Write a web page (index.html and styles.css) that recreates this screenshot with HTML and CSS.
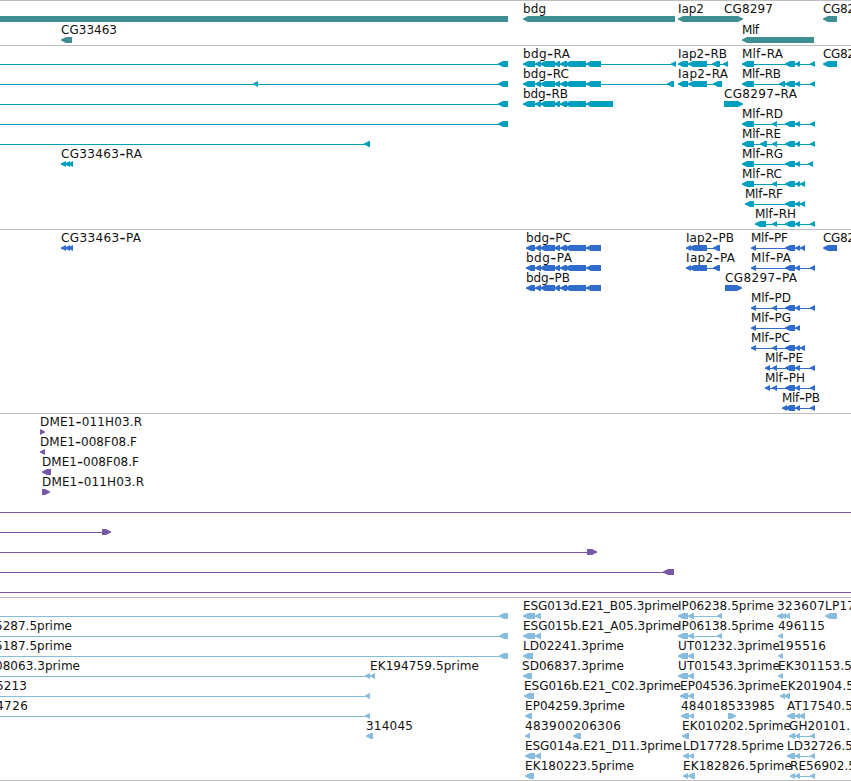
FILE: index.html
```html
<!DOCTYPE html>
<html lang="en">
<head>
<meta charset="utf-8">
<title>Genome browser</title>
<link rel="stylesheet" href="styles.css">
</head>
<body>
<main class="browser">
  <svg class="track genes" data-track="genes"></svg>
  <svg class="track transcripts" data-track="transcripts"></svg>
  <svg class="track proteins" data-track="proteins"></svg>
  <svg class="track clones" data-track="clones"></svg>
  <svg class="track ests" data-track="ests"></svg>
</main>
<script src="tracks.js"></script>
</body>
</html>
```
FILE: styles.css
```css
body {
  margin: 0;
  background: #fff;
}

.browser {
  display: flex;
  flex-direction: column;
  width: 851px;
  height: 780px;
  border-bottom: 1px solid #bebebe;
  overflow: hidden;
}

.track {
  display: block;
  flex: none;
  box-sizing: border-box;
  width: 851px;
  height: 184px;
  border-top: 1px solid #bebebe;
  overflow: hidden;
}

.genes { height: 45px; color: #3e8e93; }
.transcripts { color: #009ebf; }
.proteins { color: #306ccc; }
.clones { color: #7657a8; }
.ests { height: 183px; color: #88bcdd; }

.label {
  font: 12px "DejaVu Sans", sans-serif;
  fill: #111;
}

.hyphen {
  font-size: 17px;
}

.shape {
  fill: currentColor;
}
```
FILE: tracks.js
```js
// Feature: [row, blocks, label, label x, label width].
// Blocks are "start-end" pairs; "<" points left, ">" points right, "=" is a
// flat block, "~" is a bare intron line.
const BDG = '<535-541 <540-555 <554-560 <560-567 <565-586 ';
const MLF = ' <785-795 <795-800';

const tracks = {
  genes: [
    [0, '=0-508'],
    [0, '<523-675', 'bdg', 523, 23],
    [0, '<678-725', 'Iap2', 678, 26],
    [0, '>724-743', 'CG8297', 724, 49],
    [0, '<823-837', 'CG82', 823, 32],
    [1, '<61-72', 'CG33463', 61, 56],
    [1, '<742-814', 'Mlf', 742, 17]
  ],
  transcripts: [
    [0, '~0-508 <498-508'],
    [1, '~0-508 <253-258 <498-508'],
    [2, '~0-508 <498-508'],
    [3, '~0-508 <498-508'],
    [4, '~0-370 <364-370'],
    [5, '<61-66 <65-70 <68-73', 'CG33463-RA', 61, 81],
    [0, '<523-535 ' + BDG + '<586-601 <671-676', 'bdg-RA', 523, 47],
    [1, '<523-535 ' + BDG + '<586-601 <667-674', 'bdg-RC', 523, 46],
    [2, '<523-535 ' + BDG + '<586-613', 'bdg-RB', 523, 45],
    [0, '<678-688 <688-707 <712-720 <723-728', 'Iap2-RB', 678, 49],
    [1, '<678-688 <688-707 <713-722', 'Iap2-RA', 678, 50],
    [2, '>724-743', 'CG8297-RA', 724, 73],
    [0, '<742-754' + MLF + ' <810-815', 'Mlf-RA', 742, 41],
    [1, '<742-754 <779-785' + MLF + ' <810-815', 'Mlf-RB', 742, 39],
    [3, '<742-754 <772-777' + MLF + ' <810-815', 'Mlf-RD', 742, 41],
    [4, '<742-754 <760-767 <772-777' + MLF + ' <810-815', 'Mlf-RE', 742, 39],
    [5, '<742-754' + MLF + ' <808-813', 'Mlf-RG', 742, 41],
    [6, '<742-754 <772-777' + MLF + ' <800-805', 'Mlf-RC', 742, 40],
    [7, '<745-754' + MLF + ' <800-805', 'Mlf-RF', 745, 38],
    [8, '<755-766 <772-777' + MLF + ' <810-815', 'Mlf-RH', 755, 41],
    [0, '<823-837', 'CG82', 823, 32]
  ],
  proteins: [
    [0, '<61-66 <65-70 <68-73', 'CG33463-PA', 61, 80],
    [0, '<526-535 ' + BDG + '<586-601', 'bdg-PC', 526, 45],
    [1, '<526-535 ' + BDG + '<586-601', 'bdg-PA', 526, 46],
    [2, '<526-535 ' + BDG + '<586-601', 'bdg-PB', 526, 44],
    [0, '<686-691 <689-707 <713-720', 'Iap2-PB', 686, 48],
    [1, '<686-691 <689-707 <713-720', 'Iap2-PA', 686, 49],
    [2, '>725-742', 'CG8297-PA', 725, 72],
    [0, '<751-756' + MLF + ' <800-805', 'Mlf-PF', 751, 37],
    [1, '<751-756' + MLF + ' <810-815', 'Mlf-PA', 751, 40],
    [3, '<751-756 <772-777' + MLF + ' <810-815', 'Mlf-PD', 751, 40],
    [4, '<751-756' + MLF, 'Mlf-PG', 751, 40],
    [5, '<751-756 <772-777' + MLF + ' <800-805', 'Mlf-PC', 751, 39],
    [6, '<765-770 <772-777' + MLF + ' <810-815', 'Mlf-PE', 765, 38],
    [7, '<765-770 <772-777' + MLF + ' <810-815', 'Mlf-PH', 765, 40],
    [8, '<782-787' + MLF + ' <810-815', 'Mlf-PB', 782, 38],
    [0, '<823-837', 'CG82', 823, 32]
  ],
  clones: [
    [0, '>40-45', 'DME1-011H03.R', 40, 102],
    [1, '<40-45', 'DME1-008F08.F', 40, 97],
    [2, '<42-51', 'DME1-008F08.F', 42, 97],
    [3, '>42-50', 'DME1-011H03.R', 42, 102],
    [4, '~0-851'],
    [5, '~0-111 >102-111'],
    [6, '~0-597 >587-597'],
    [7, '~0-674 <663-674'],
    [8, '~0-851']
  ],
  ests: [
    [0, '~0-508 <499-508'],
    [1, '~0-508 <499-508', '5287.5prime', -5, 77],
    [2, '~0-508 <499-508', '5187.5prime', -5, 77],
    [3, '~0-375 <365-370 <370-375', '08063.3prime', -5, 85],
    [4, '~0-370 <365-370', '5213', -4, 31],
    [5, '~0-370 <365-370', '4726', -4, 32],
    [3, '', 'EK194759.5prime', 370, 109],
    [6, '<366-373', '314045', 366, 47],
    [0, '<523-535 <535-541', 'ESG013d.E21_B05.3prime', 523, 156],
    [1, '<523-535 <535-541', 'ESG015b.E21_A05.3prime', 523, 157],
    [2, '<523-533', 'LD02241.3prime', 523, 101],
    [3, '<523-532', 'SD06837.3prime', 522, 102],
    [4, '<524-534', 'ESG016b.E21_C02.3prime', 524, 157],
    [5, '<525-532', 'EP04259.3prime', 525, 100],
    [6, '<525-530', '483900206306', 525, 96],
    [6, '<573-581'],
    [7, '<525-535 <535-541', 'ESG014a.E21_D11.3prime', 525, 157],
    [8, '<525-534', 'EK180223.5prime', 525, 109],
    [0, '<678-688 <688-694 <717-722', 'IP06238.5prime', 678, 96],
    [1, '<678-688 <688-694 <717-722', 'IP06138.5prime', 678, 96],
    [2, '<678-688 <688-694', 'UT01232.3prime', 678, 102],
    [3, '<678-688 <688-694', 'UT01543.3prime', 678, 102],
    [4, '<680-688 <688-694', 'EP04536.3prime', 680, 100],
    [5, '<681-689 <689-694', '484018533985', 681, 94],
    [5, '>728-736'],
    [6, '<682-689', 'EK010202.5prime', 682, 109],
    [7, '<683-689 <689-694', 'LD17728.5prime', 683, 101],
    [8, '<683-688 <688-695', 'EK182826.5prime', 683, 109],
    [0, '<777-783 <781-786 <785-790', '323607', 777, 48],
    [1, '<778-783', '496115', 778, 47],
    [2, '<778-783', '195516', 778, 48],
    [3, '<778-783', 'EK301153.5', 778, 74],
    [4, '<780-785 <784-790', 'EK201904.5', 780, 74],
    [5, '<787-795 <795-800 <799-805', 'AT17540.5', 787, 66],
    [6, '<789-795 <795-800 <810-815', 'GH20101.', 789, 61],
    [7, '<787-795 <795-800 <810-815', 'LD32726.5', 787, 66],
    [8, '<790-795 <795-800 <810-815', 'RE56902.5', 790, 66],
    [0, '<825-837', 'LP17', 825, 30]
  ]
};

const NS = 'http://www.w3.org/2000/svg';

function add(parent, tag, attrs, text) {
  const el = document.createElementNS(NS, tag);
  for (const key in attrs) el.setAttribute(key, attrs[key]);
  if (text) el.textContent = text;
  parent.appendChild(el);
  return el;
}

function outline(kind, a, b, top) {
  const bottom = top + 6;
  const tip = Math.min(5, b - a);
  const mid = top + 3;
  if (kind === '<') {
    return `M${a} ${mid - .4}L${a + tip} ${top}H${b}V${bottom}H${a + tip}L${a} ${mid + .6}Z`;
  }
  if (kind === '>') {
    return `M${a} ${top}H${b - tip}L${b} ${mid - .4}V${mid + .6}L${b - tip} ${bottom}H${a}Z`;
  }
  if (kind === '~') return `M${a} ${mid}H${b}V${mid + 1}H${a}Z`;
  return `M${a} ${top}H${b}V${bottom}H${a}Z`;
}

// The hyphen is set larger than the letters, so it is lowered to mid-height.
function drawLabel(svg, label, x, y, width) {
  const text = add(svg, 'text', { class: 'label', x, y });
  const [head, tail] = label.split('-');
  add(text, 'tspan', {}, head);
  if (tail) {
    add(text, 'tspan', { class: 'hyphen', dy: 1 }, '-');
    add(text, 'tspan', { dy: -1 }, tail);
  }
  text.setAttribute('textLength', width);
}

document.querySelectorAll('.track').forEach(svg => {
  const name = svg.dataset.track;
  const pitch = name === 'genes' ? 21 : 20;
  tracks[name].forEach(([row, blocks, label, x, width]) => {
    const baseline = 12 + row * pitch;
    const parts = blocks.split(' ').filter(Boolean).map(b => {
      const [start, end] = b.slice(1).split('-').map(Number);
      return [b[0], start, end];
    });
    if (parts.length > 1) parts.push(['~', parts[0][1], parts[parts.length - 1][2]]);
    parts.forEach(p => add(svg, 'path', { class: 'shape', d: outline(...p, baseline + 3) }));
    if (label) drawLabel(svg, label, x, baseline, width);
  });
});
```
